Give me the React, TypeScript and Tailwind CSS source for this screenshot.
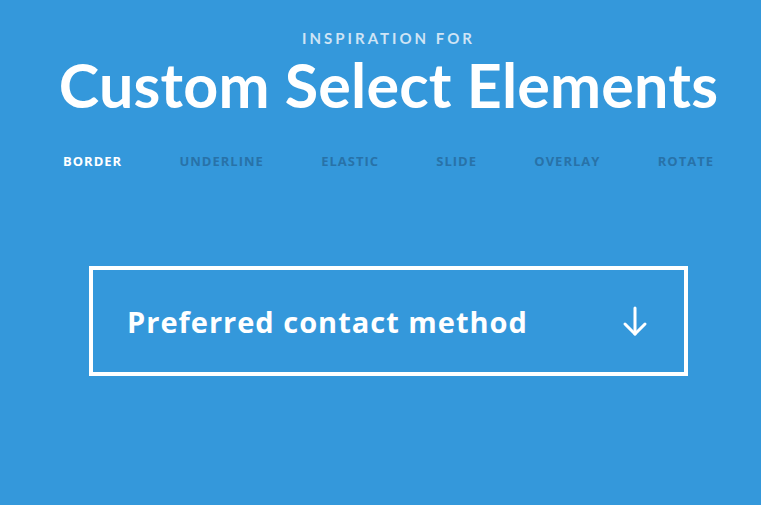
import React from 'react';

const tabs = ['Border', 'Underline', 'Elastic', 'Slide', 'Overlay', 'Rotate'];

export default function App() {
  return (
    <div
      className="min-h-[505px] w-full bg-[#3498db] text-white"
      style={{ fontFamily: 'Lato, "Open Sans", sans-serif' }}
    >
      <header className="flex flex-col items-center pl-[16px] pt-[29px]">
        <span className="text-[15px] font-bold uppercase leading-[18px] tracking-[3px] text-[#cfe4f5]">
          Inspiration for
        </span>
        <h1 className="mt-[2px] text-[61px] font-bold leading-[72px] tracking-[0.2px]">
          Custom Select Elements
        </h1>
      </header>

      <nav
        className="mx-auto mt-[32px] flex w-[651px] translate-x-[8px] justify-between"
        style={{ fontFamily: '"Open Sans", Lato, sans-serif' }}
      >
        {tabs.map((tab, i) => (
          <a
            key={tab}
            className={
              'text-[13px] font-bold uppercase leading-[16px] tracking-[1px] ' +
              (i === 0 ? 'text-white' : 'text-[#2872a8]')
            }
          >
            {tab}
          </a>
        ))}
      </nav>

      <div className="mt-[97px] flex justify-center pl-[16px]">
        <div className="flex h-[110px] w-[599px] items-center justify-between border-4 border-white pl-[34px] pr-[36px]">
          <span
            className="pt-[2px] text-[29px] font-bold tracking-[1px]"
            style={{ fontFamily: '"Open Sans", Lato, sans-serif' }}
          >
            Preferred contact method
          </span>
          <svg width="26" height="32" viewBox="0 0 26 32" fill="none" stroke="white" strokeWidth="3" strokeLinecap="round" strokeLinejoin="round">
            <path d="M13 3 V29" />
            <path d="M3 19 L13 29 L23 19" />
          </svg>
        </div>
      </div>
    </div>
  );
}
